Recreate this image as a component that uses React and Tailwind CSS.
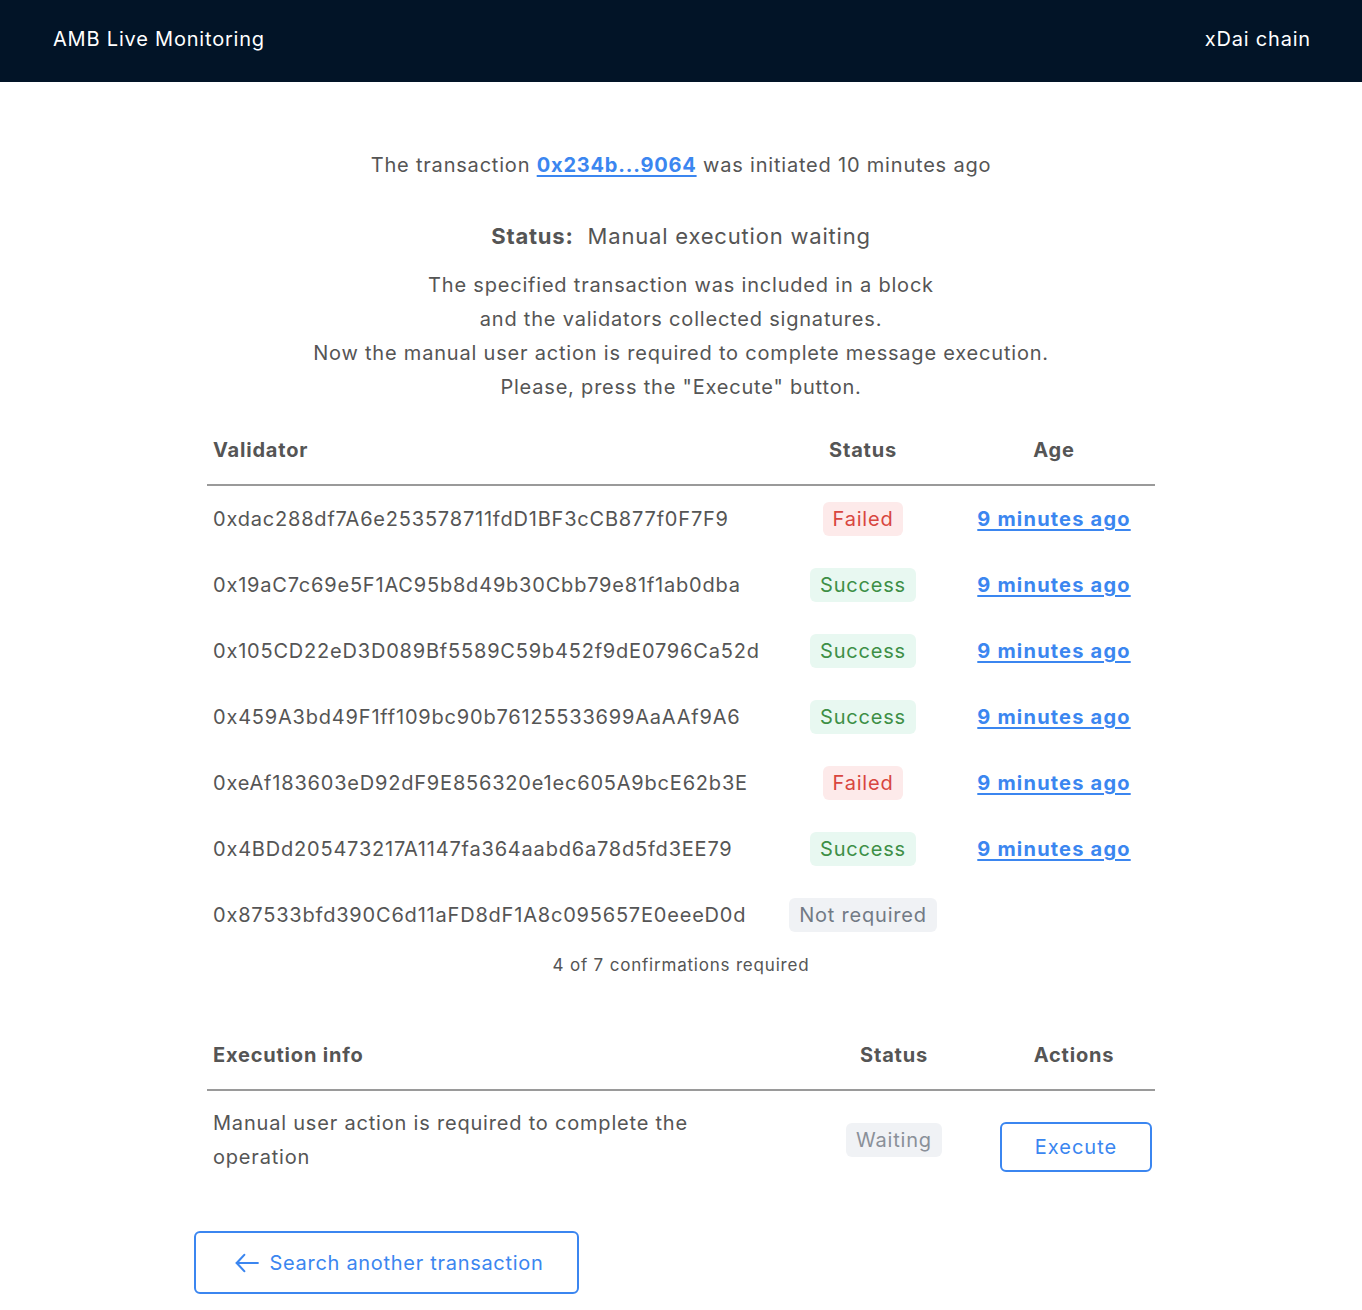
import React from 'react';

const validators = [
  { address: '0xdac288df7A6e253578711fdD1BF3cCB877f0F7F9', status: 'Failed' },
  { address: '0x19aC7c69e5F1AC95b8d49b30Cbb79e81f1ab0dba', status: 'Success' },
  { address: '0x105CD22eD3D089Bf5589C59b452f9dE0796Ca52d', status: 'Success' },
  { address: '0x459A3bd49F1ff109bc90b76125533699AaAAf9A6', status: 'Success' },
  { address: '0xeAf183603eD92dF9E856320e1ec605A9bcE62b3E', status: 'Failed' },
  { address: '0x4BDd205473217A1147fa364aabd6a78d5fd3EE79', status: 'Success' },
  { address: '0x87533bfd390C6d11aFD8dF1A8c095657E0eeeD0d', status: 'Not required' },
];

const badgeStyles = {
  Failed: 'bg-[#fdeaea] text-[#d8463f]',
  Success: 'bg-[#e8f8f1] text-[#3d8f46]',
  'Not required': 'bg-[#f0f2f5] text-[#727a85]',
  Waiting: 'bg-[#f0f2f5] text-[#8a9099]',
};

const Badge = ({ label }) => (
  <span className={`inline-block rounded-md px-[10px] leading-[34px] ${badgeStyles[label]}`}>{label}</span>
);

const App = () => {
  return (
    <div className="min-h-[1310px] bg-white font-['Inter',sans-serif] text-[#555555] tracking-[0.05em]">
      {/* Header */}
      <header className="h-[82px] bg-[#021427] flex items-center justify-between pl-[53px] pr-[51px] pb-[5px] text-white text-[20px] tracking-[0.04em]">
        <span>AMB Live Monitoring</span>
        <span>xDai chain</span>
      </header>

      <main className="w-[948px] mx-auto pt-[68px] text-[20px]">
        <p className="text-center leading-[30px]">
          The transaction{' '}
          <a href="#" className="font-bold text-[#3b86f0] underline underline-offset-[3px]">0x234b...9064</a>{' '}
          was initiated 10 minutes ago
        </p>

        <p className="text-center text-[22px] leading-[30px] mt-[41px]">
          <strong className="font-bold">Status:</strong>&nbsp; Manual execution waiting
        </p>

        <div className="text-center leading-[34px] mt-[17px]">
          <p>The specified transaction was included in a block</p>
          <p>and the validators collected signatures.</p>
          <p>Now the manual user action is required to complete message execution.</p>
          <p>Please, press the "Execute" button.</p>
        </div>

        {/* Validators table */}
        <div className="mt-[12px]">
          <div className="grid grid-cols-[566px_180px_202px] items-center h-[70px] border-b-2 border-[#9a9a9a] font-bold">
            <span className="pl-[6px]">Validator</span>
            <span className="text-center">Status</span>
            <span className="text-center">Age</span>
          </div>
          {validators.map((v) => (
            <div key={v.address} className="grid grid-cols-[566px_180px_202px] items-center h-[66px]">
              <span className="pl-[6px] whitespace-nowrap tracking-[0.04em]">{v.address}</span>
              <span className="text-center">
                <Badge label={v.status} />
              </span>
              <span className="text-center">
                {v.status !== 'Not required' && (
                  <a href="#" className="font-bold text-[#3b86f0] underline underline-offset-[3px] tracking-[0.06em]">9 minutes ago</a>
                )}
              </span>
            </div>
          ))}
          <p className="text-center text-[17px] leading-[24px] mt-[5px]">4 of 7 confirmations required</p>
        </div>

        {/* Execution table */}
        <div className="mt-[44px]">
          <div className="grid grid-cols-[588px_198px_162px] items-center h-[70px] border-b-2 border-[#9a9a9a] font-bold">
            <span className="pl-[6px]">Execution info</span>
            <span className="text-center">Status</span>
            <span className="text-center">Actions</span>
          </div>
          <div className="grid grid-cols-[588px_198px_162px] items-center py-[15px]">
            <p className="pl-[6px] pr-[90px] leading-[34px]">Manual user action is required to complete the operation</p>
            <span className="text-center">
              <Badge label="Waiting" />
            </span>
            <span className="flex justify-center">
              <button
                type="button"
                className="w-[152px] h-[50px] mt-[14px] ml-[4px] rounded-md border-2 border-[#3b86f0] text-[#3b86f0] tracking-[0.05em]"
              >
                Execute
              </button>
            </span>
          </div>
        </div>
      </main>

      <div className="w-[948px] mx-auto mt-[42px]">
        <button
          type="button"
          className="-ml-[13px] w-[385px] h-[63px] pl-[4px] rounded-md border-2 border-[#3b86f0] text-[#3b86f0] text-[20px] flex items-center justify-center gap-[10px] tracking-[0.035em]"
        >
          <svg width="26" height="26" viewBox="0 0 24 24" fill="none" stroke="currentColor" strokeWidth="2" strokeLinecap="round" strokeLinejoin="round">
            <path d="M22 12H2.5" />
            <path d="M9.5 4.5L2.5 12l7 7.5" />
          </svg>
          Search another transaction
        </button>
      </div>
    </div>
  );
};

export default App;
